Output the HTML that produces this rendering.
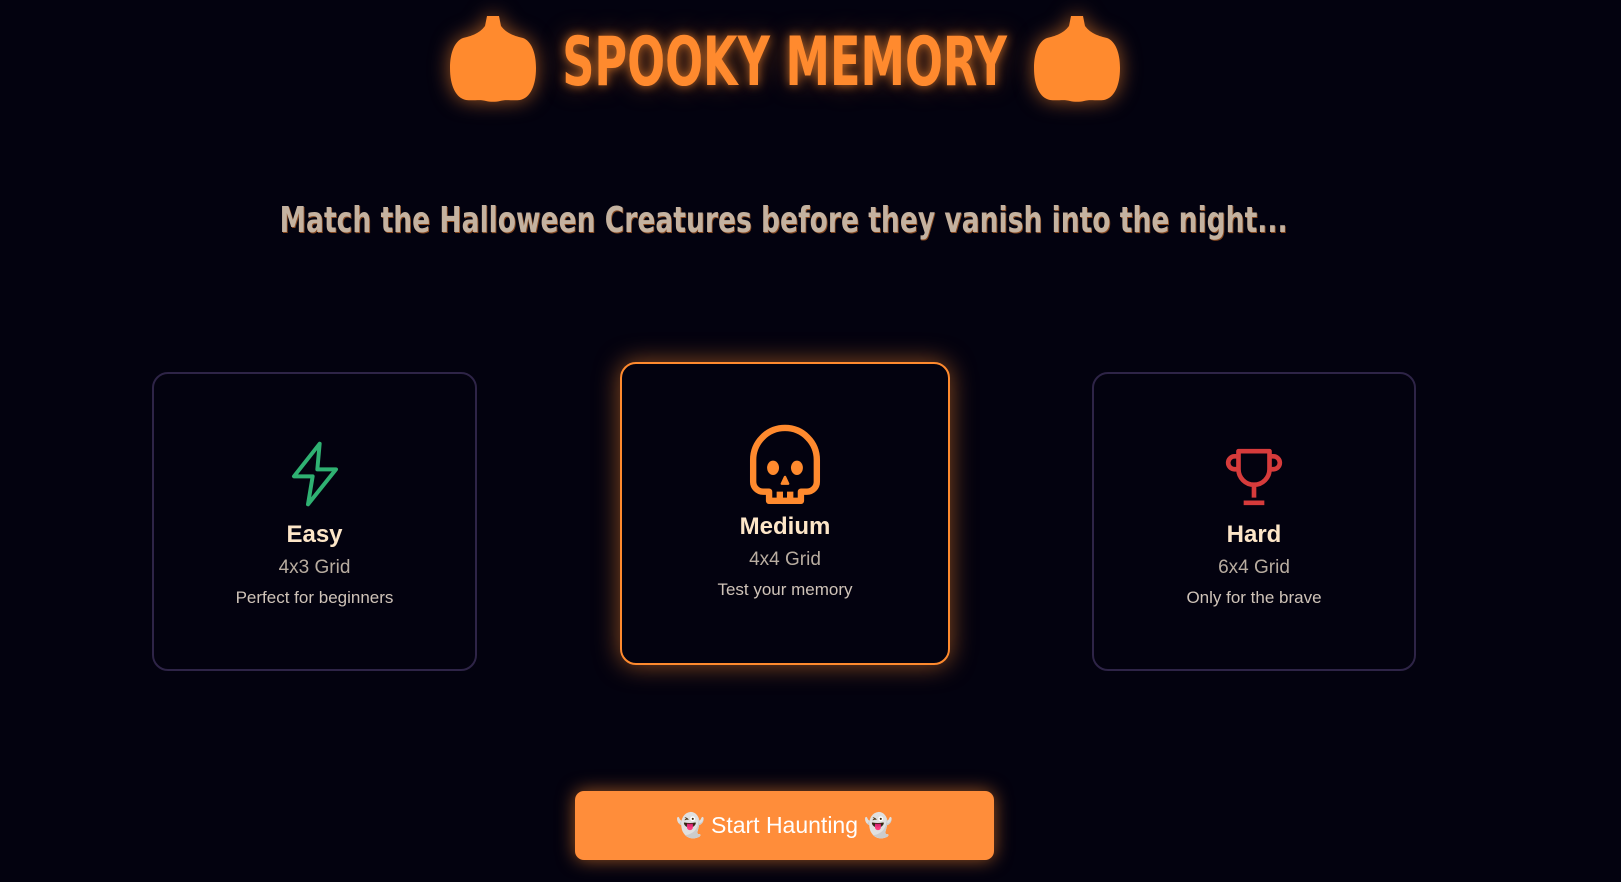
<!DOCTYPE html>
<html><head><meta charset="utf-8"><style>
*{margin:0;padding:0;box-sizing:border-box}
body{width:1621px;height:882px;background:#03020f;overflow:hidden;position:relative;font-family:"Liberation Sans",sans-serif}
.abs{position:absolute}
.title{left:461px;top:22px;width:647px;height:80px;color:#ff8a2e;font:bold 68px "DejaVu Sans Condensed","Liberation Sans",sans-serif;white-space:nowrap;text-shadow:0 0 12px rgba(255,138,46,.7),0 0 30px rgba(255,138,46,.4);display:flex;align-items:center;justify-content:center}
.title span{display:inline-block;transform:scaleX(.73)}
.sub{left:181px;top:196px;width:1206px;height:48px;color:#c4b2a0;font:bold 36px "DejaVu Sans Condensed","Liberation Sans",sans-serif;white-space:nowrap;display:flex;align-items:center;justify-content:center;text-shadow:1px 1px 0 #8a4a20}
.sub span{display:inline-block;transform:scaleX(.82)}
.card{border:2px solid #2e2447;border-radius:16px;background:#03020f;text-align:center}
.card.med{border-color:#ff8a2e;box-shadow:0 0 25px rgba(255,138,46,.55)}
.card h3{color:#fde6c8;font-size:24px;font-weight:bold;margin-top:10px}
.card .g{color:#b8aca0;font-size:19px;margin-top:8px}
.card .d{color:#cfc3b8;font-size:17px;margin-top:9px}
.btn{left:575px;top:791px;width:419px;height:69px;background:#ff8d3a;border-radius:9px;box-shadow:0 0 18px rgba(255,138,46,.6);color:#fff;font-size:23px;display:flex;align-items:center;justify-content:center}
svg{overflow:visible}
</style></head><body>
<svg class="abs" style="left:449px;top:16px;overflow:visible" width="88" height="86" viewBox="0 0 88 86"><path d="M38 0h12l2 10c6 8 14 10 22 12 8 3 13 14 13 30 0 18-6 30-16 32-8 1-14-1-20 1-4 1-10 1-14 0-6-2-12 0-20-1C7 82 1 70 1 52 1 36 6 25 14 22c8-2 16-4 22-12z" fill="#ff8a2e" style="filter:drop-shadow(0 0 10px rgba(255,138,46,.6))"/></svg>
<svg class="abs" style="left:1033px;top:16px;overflow:visible" width="88" height="86" viewBox="0 0 88 86"><path d="M38 0h12l2 10c6 8 14 10 22 12 8 3 13 14 13 30 0 18-6 30-16 32-8 1-14-1-20 1-4 1-10 1-14 0-6-2-12 0-20-1C7 82 1 70 1 52 1 36 6 25 14 22c8-2 16-4 22-12z" fill="#ff8a2e" style="filter:drop-shadow(0 0 10px rgba(255,138,46,.6))"/></svg>
<div class="abs title"><span>SPOOKY MEMORY</span></div>
<div class="abs sub"><span>Match the Halloween Creatures before they vanish into the night...</span></div>

<div class="abs card" style="left:152px;top:372px;width:325px;height:299px">
<svg style="margin-top:66px" width="56" height="68" viewBox="0 0 24 28" fill="none" stroke="#2fb172" stroke-width="1.7" stroke-linejoin="round"><path d="M14 1 3 15h8l-2 12 12-15h-8z"/></svg>
<h3 style="margin-top:8px">Easy</h3><div class="g">4x3 Grid</div><div class="d">Perfect for beginners</div></div>

<div class="abs card med" style="left:620px;top:362px;width:330px;height:303px">
<svg style="margin-top:62px" width="74" height="78" viewBox="3.3 1.5 17.4 19.6" fill="none" stroke="#ff8a2e" stroke-width="1.6" stroke-linejoin="round"><path d="M8 20.3v-2.3H6.5A2.5 2.5 0 0 1 4 15.5V10a8 8 0 0 1 16 0v5.5a2.5 2.5 0 0 1-2.5 2.5H16v2.3z"/><path d="M10.7 20.3v-2.3M13.3 20.3v-2.3"/><ellipse cx="9" cy="12" rx="1.5" ry="1.8" fill="#ff8a2e" stroke="none"/><ellipse cx="15" cy="12" rx="1.5" ry="1.8" fill="#ff8a2e" stroke="none"/><path d="M12 14.3l-.8 1.7h1.6z" fill="#ff8a2e" stroke-width=".6"/></svg>
<h3 style="margin-top:4px">Medium</h3><div class="g">4x4 Grid</div><div class="d">Test your memory</div></div>

<div class="abs card" style="left:1092px;top:372px;width:324px;height:299px">
<svg style="margin-top:72px" width="64" height="62" viewBox="0 0 24 24" fill="none" stroke="#d63b3b" stroke-width="1.8" stroke-linejoin="round"><path d="M6 9H4.5a2.5 2.5 0 0 1 0-5H6M18 9h1.5a2.5 2.5 0 0 0 0-5H18"/><path d="M6 2h12v7a6 6 0 0 1-12 0z"/><path d="M12 15v5M8 22h8"/></svg>
<h3 style="margin-top:8px">Hard</h3><div class="g">6x4 Grid</div><div class="d">Only for the brave</div></div>

<div class="abs btn">👻 Start Haunting 👻</div>
</body></html>
